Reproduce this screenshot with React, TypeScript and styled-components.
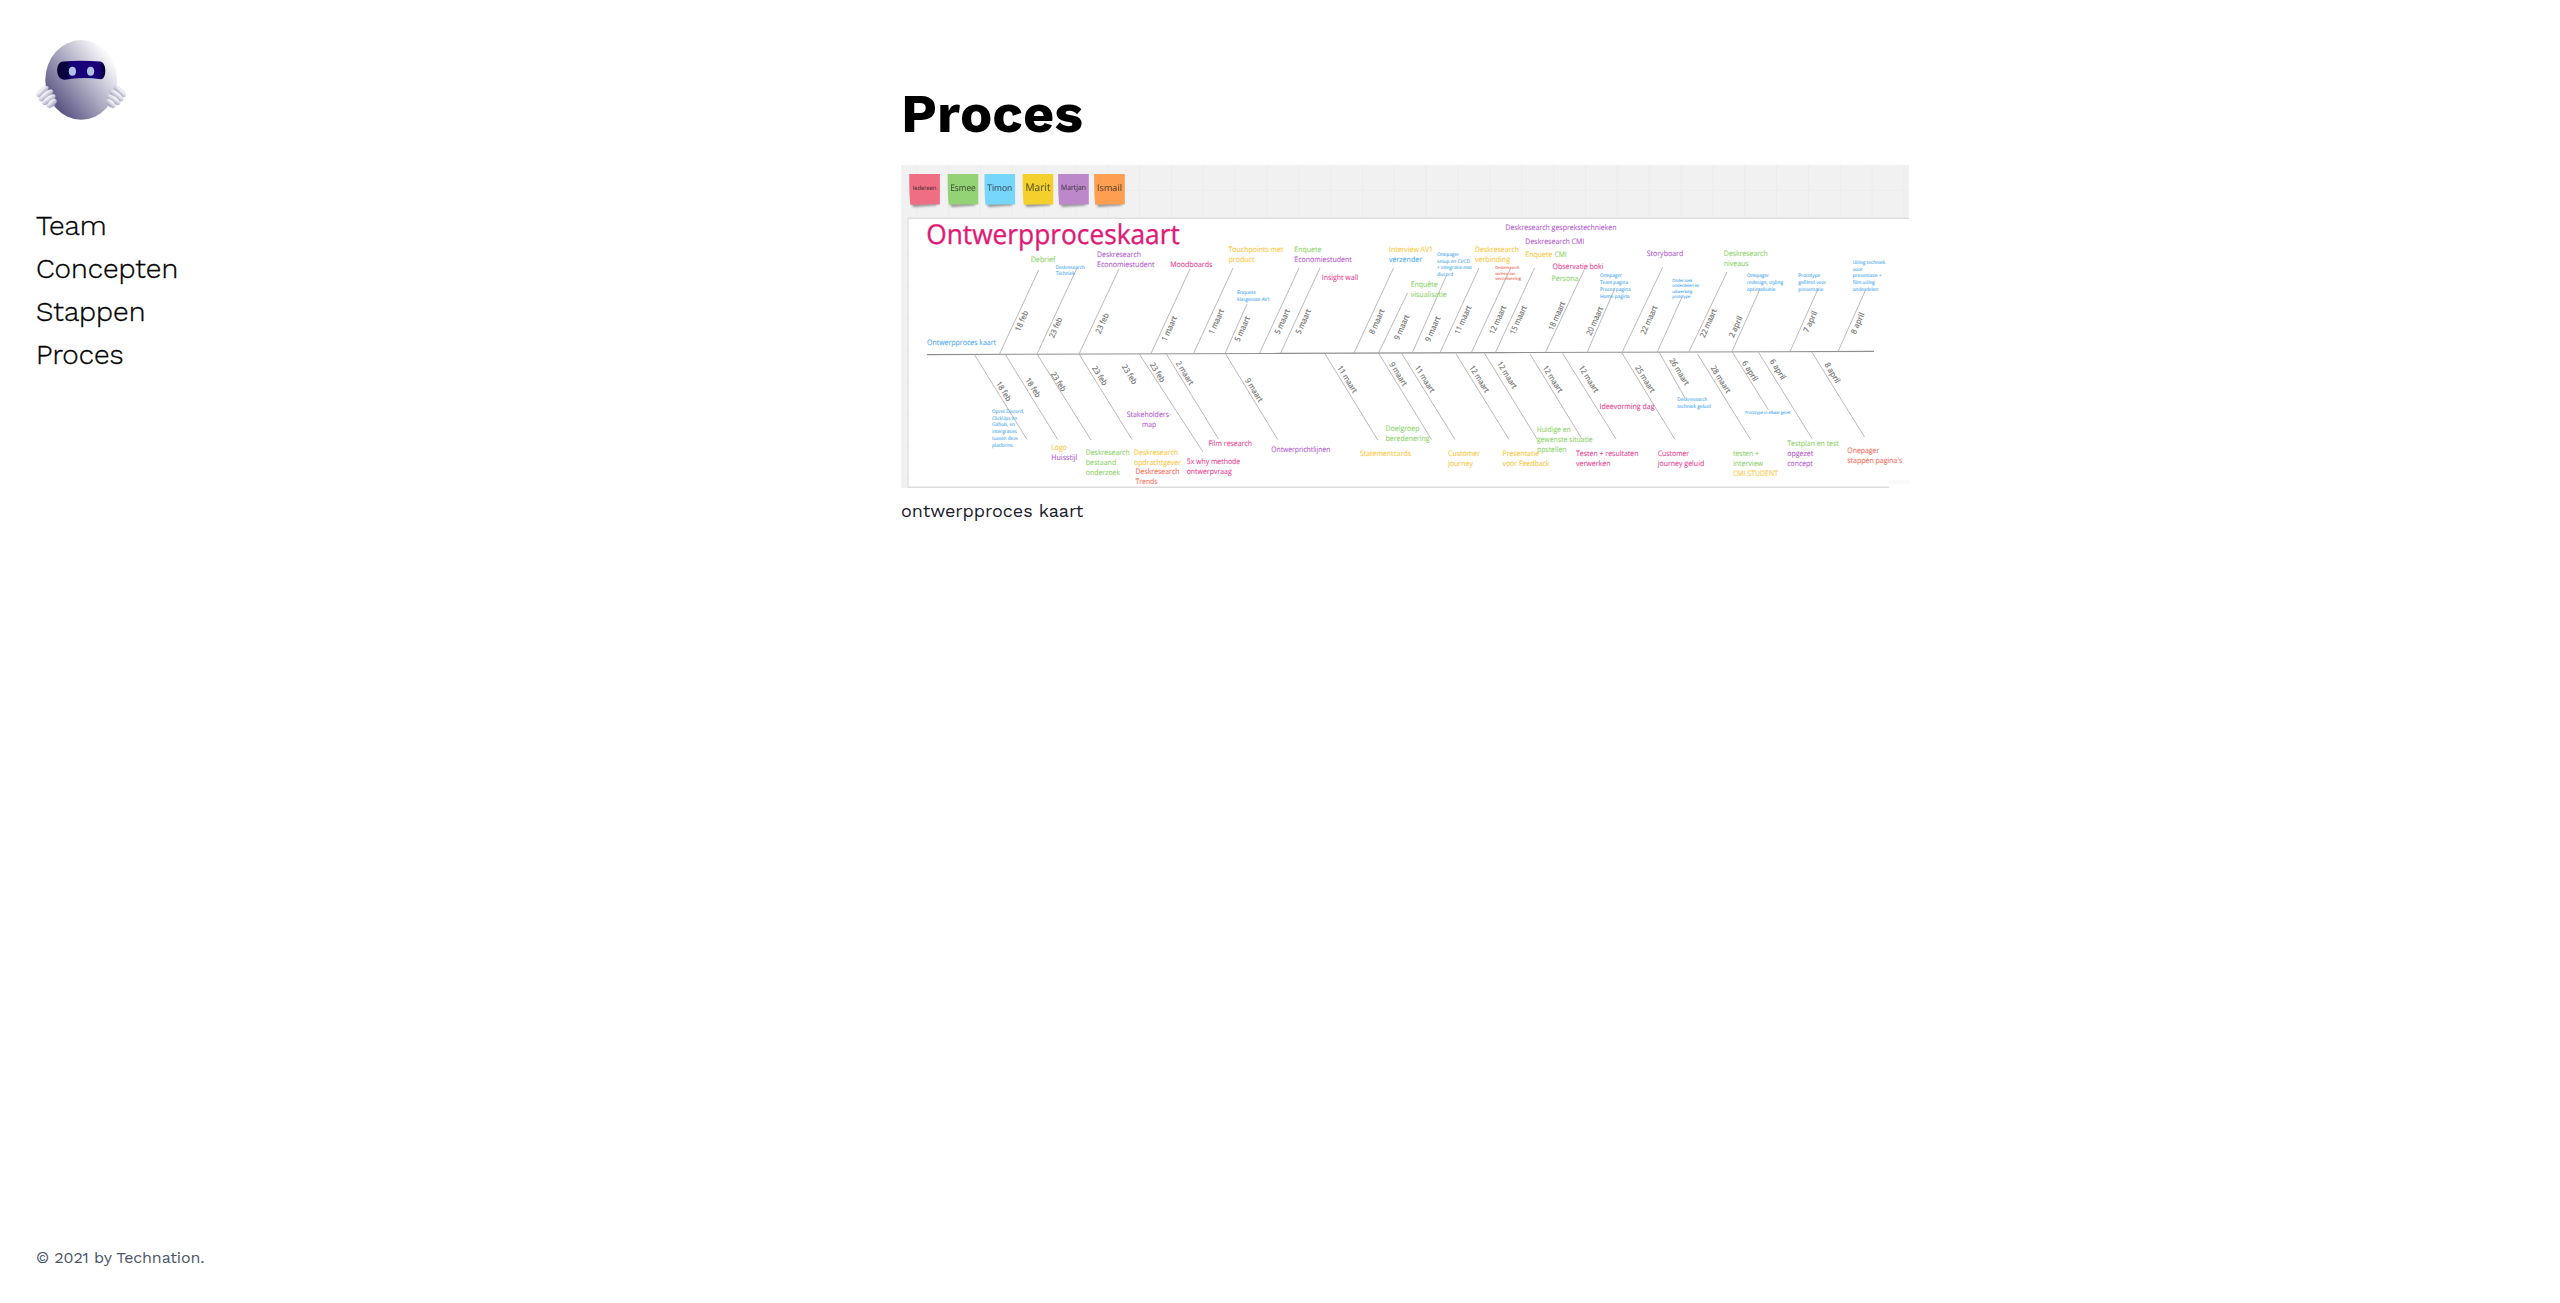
import React from "react";
import styled, { createGlobalStyle } from "styled-components";

const GlobalStyle = createGlobalStyle`
  *, *::before, *::after { box-sizing: border-box; }
  body { margin: 0; background: #fff; font-family: "Work Sans", Inter, "Liberation Sans", sans-serif; }
`;

const Page = styled.div`
  display: grid;
  grid-template-columns: 865px 1080px;
  height: 1303px;
  overflow: hidden;
`;
const Sidebar = styled.aside`
  display: flex;
  flex-direction: column;
  padding: 36px 36px 35px;
`;
const Logo = styled.svg`
  width: 92px;
  height: 88px;
  display: block;
`;
const Nav = styled.nav`
  display: flex;
  flex-direction: column;
  align-items: flex-start;
  margin-top: 80px;
`;
const NavLink = styled.a`
  font-size: 28px;
  line-height: 43px;
  font-weight: 300;
  color: #000;
  -webkit-text-stroke: 0.35px #000;
  text-decoration: none;
`;
const Footer = styled.footer`
  margin-top: auto;
  font-size: 16px;
  line-height: 20px;
  letter-spacing: -0.12px;
  color: #4a5568;
`;
const Main = styled.main`
  padding: 84px 36px 0;
`;
const Title = styled.h1`
  margin: 0 0 21px;
  font-size: 54px;
  line-height: 60px;
  font-weight: 700;
  color: #000;
`;
const Figure = styled.figure`
  margin: 0;
`;
const Board = styled.svg`
  display: block;
  width: 1008px;
  height: 323px;
  font-family: "Open Sans", "Noto Sans", sans-serif;
  text-rendering: geometricPrecision;
`;
const Caption = styled.figcaption`
  margin-top: 10px;
  font-size: 18px;
  line-height: 26px;
  letter-spacing: -0.05px;
  color: #1a202c;
`;

const green = "#92d56f";
const purple = "#b65fce";
const pink = "#e84a96";
const yellow = "#fcca45";
const blue = "#52aef0";
const red = "#f47461";

type Label = [string, number, number, number, string, number?];

const labels: Label[] = [
  ["Ontwerpproces kaart", 927, 345, 69, blue],
  ["Debrief", 1030.7, 261.6, 24.7, green],
  ["Deskresearch", 1055.7, 268.5, 29, blue, 4.8],
  ["Techniek", 1055.7, 275.3, 19, blue, 4.8],
  ["Deskresearch", 1097, 256.5, 44, purple],
  ["Economiestudent", 1097, 266.5, 57.5, purple],
  ["Moodboards", 1170.3, 266.5, 42, pink],
  ["Touchpoints met", 1228.5, 251.5, 55, yellow],
  ["product", 1228.5, 261.5, 26, yellow],
  ["Enquete", 1294.3, 251.5, 27, green],
  ["Economiestudent", 1294.3, 261.5, 57.5, purple],
  ["Insight wall", 1321.7, 279.7, 36.5, pink],
  ["Enquete", 1237, 294, 19, blue, 4.8],
  ["klasgenote AV1", 1237, 300.5, 33, blue, 4.8],
  ["Interview AV1", 1389, 251.5, 44, yellow],
  ["verzender", 1389, 261.5, 33, blue],
  ["Onepager", 1437, 256, 22, blue, 4.8],
  ["setup en CI/CD", 1437, 262.7, 33, blue, 4.8],
  ["+ integratie met", 1437, 269.3, 35, blue, 4.8],
  ["discord", 1437, 276, 16, blue, 4.8],
  ["Enquête", 1410.7, 286.5, 27, green],
  ["visualisatie", 1410.7, 296.7, 36, green],
  ["Deskresearch", 1475, 251.5, 44, yellow],
  ["verbinding", 1475, 261.5, 35, yellow],
  ["Deskresearch", 1495.3, 269.3, 24, red, 4.1],
  ["vormen van", 1495.3, 274.7, 20, red, 4.1],
  ["verzelvering", 1495.3, 280.2, 26, red, 4.1],
  ["Deskresearch gesprekstechnieken", 1505.5, 229.6, 111, purple],
  ["Deskresearch CMI", 1525.3, 243.7, 59, purple],
  ["Enquete", 1525.3, 256.5, 27, yellow],
  ["CMI", 1554.5, 256.5, 12.2, green],
  ["Observatie boki", 1552.5, 268.7, 51, pink],
  ["Persona", 1551.5, 281, 27, green],
  ["Onepager", 1600, 277.2, 22, blue, 4.8],
  ["Team pagina", 1600, 284, 28, blue, 4.8],
  ["Proces pagina", 1600, 290.7, 30.5, blue, 4.8],
  ["Home pagina", 1600, 297.5, 29.5, blue, 4.8],
  ["Storyboard", 1646.7, 255.5, 36.5, purple],
  ["Onderzoek", 1672.3, 281.5, 20, blue, 4.3],
  ["onderdelen en", 1672.3, 287.2, 27, blue, 4.3],
  ["uitwerking", 1672.3, 292.9, 20, blue, 4.3],
  ["prototype", 1672.3, 298.4, 18, blue, 4.3],
  ["Deskresearch", 1723.7, 256, 44, green],
  ["niveaus", 1723.7, 266, 25, green],
  ["Onepager", 1747, 277.2, 22, blue, 4.8],
  ["redesign, styling", 1747, 284, 36, blue, 4.8],
  ["optimalisatie", 1747, 290.7, 28.5, blue, 4.8],
  ["Prototype", 1798.3, 277.2, 22, blue, 4.8],
  ["gefilmd voor", 1798.3, 284, 28, blue, 4.8],
  ["presentatie", 1798.3, 290.7, 25, blue, 4.8],
  ["Uitleg techniek", 1852.7, 263.7, 32.5, blue, 4.8],
  ["voor", 1852.7, 270.5, 10, blue, 4.8],
  ["presentatie +", 1852.7, 277.2, 29, blue, 4.8],
  ["film uitleg", 1852.7, 284, 22, blue, 4.8],
  ["onderdelen", 1852.7, 290.7, 25.5, blue, 4.8],
  ["Opzet Discord,", 992, 412.7, 32, blue, 4.8],
  ["ClickUps en", 992, 419.5, 25, blue, 4.8],
  ["Github, en", 992, 426.2, 23, blue, 4.8],
  ["intergraties", 992, 433, 25, blue, 4.8],
  ["tussen deze", 992, 439.7, 26, blue, 4.8],
  ["platforms", 992, 446.5, 21, blue, 4.8],
  ["Logo", 1051.3, 450.3, 15.5, yellow],
  ["Huisstijl", 1051.3, 460.3, 26, purple],
  ["Deskresearch", 1085.7, 455.3, 44, green],
  ["bestaand", 1085.7, 465.3, 30.5, green],
  ["onderzoek", 1085.7, 475.3, 34.5, green],
  ["Stakeholders-", 1126.7, 416.7, 44.5, purple],
  ["map", 1142, 426.7, 14, purple],
  ["Deskresearch", 1134, 455.3, 44, yellow],
  ["opdrachtgever", 1134, 465.3, 47, yellow],
  ["Deskresearch", 1135.5, 474.3, 44, red],
  ["Trends", 1135.5, 484.3, 22, red],
  ["Film research", 1208.5, 446.3, 43.5, pink],
  ["5x why methode", 1186.7, 464.2, 53.5, pink],
  ["ontwerpvraag", 1186.7, 474.2, 45, pink],
  ["Ontwerprichtlijnen", 1271.3, 451.7, 59, purple],
  ["Doelgroep", 1385.5, 430.7, 34, green],
  ["beredenering", 1385.5, 440.9, 44, green],
  ["Statementcards", 1360, 456.2, 51, yellow],
  ["Customer", 1448, 456.2, 32, yellow],
  ["journey", 1448, 466.2, 25, yellow],
  ["Presentatie", 1502.5, 456.4, 36.5, yellow],
  ["voor Feedback", 1502.5, 466.4, 47, yellow],
  ["Huidige en", 1536.7, 431.7, 34, green],
  ["gewenste situatie", 1536.7, 441.7, 56, green],
  ["opstellen", 1537, 451.5, 29.5, green],
  ["Testen + resultaten", 1576, 456.2, 62.5, pink],
  ["verwerken", 1576, 466.2, 34.5, pink],
  ["Ideevorming dag", 1599.5, 409.3, 55, pink],
  ["Deskresearch", 1677.3, 401, 30, blue, 4.8],
  ["techniek geluid", 1677.3, 407.7, 33.3, blue, 4.8],
  ["Prototype in elkaar gezet", 1745, 414.3, 45.5, blue, 4.3],
  ["Customer", 1657.7, 456.2, 31.5, pink],
  ["journey geluid", 1657.7, 466.2, 46.5, pink],
  ["testen +", 1733, 456.2, 26, green],
  ["interview", 1733, 466.2, 30, green],
  ["CMI STUDENT", 1733, 476.2, 45, yellow],
  ["Testplan en test", 1787.3, 446.3, 51.5, green],
  ["opgezet", 1787.3, 456.3, 26, purple],
  ["concept", 1787.3, 466.3, 25.5, purple],
  ["Onepager", 1847.3, 453.3, 32, red],
  ["stappen pagina's", 1847.3, 463.3, 55, red],
];

const branches: [number, number, number, number][] = [
  [1038.7, 270, 999.5, 354], [1077, 268, 1037, 354], [1119, 269, 1079, 354],
  [1190, 269, 1151, 353.5], [1233, 268, 1193.5, 353.5], [1247, 304, 1225, 353.5],
  [1299, 268, 1259.5, 353.3], [1320, 268, 1280.5, 353.3], [1393.5, 268, 1354, 353],
  [1407.5, 293, 1378.5, 353], [1446.7, 275, 1412.3, 352.7], [1479, 268, 1440, 352.7],
  [1510.7, 268, 1471.3, 352.7], [1534.5, 268, 1495.3, 352.7], [1585, 268, 1545.5, 352.3],
  [1615, 288, 1587.3, 352], [1662.7, 267.3, 1622.3, 352], [1682, 297, 1657.3, 352],
  [1727, 272, 1689, 351.7], [1760, 289, 1732, 351.5], [1818, 289, 1790, 351.5],
  [1866, 289, 1838, 351.5],
  [974, 354, 1027, 439.5], [1005, 354, 1057.7, 439.5], [1037, 354, 1091, 440],
  [1079, 354, 1132, 439.5], [1139.3, 354, 1203, 452], [1166, 353.5, 1218.5, 439],
  [1225, 353, 1277.7, 439.5], [1324.5, 353, 1377.7, 440], [1378.5, 353, 1431.5, 439.5],
  [1402, 354, 1455, 439.5], [1456, 354, 1509, 439.5], [1484, 352.5, 1537, 439],
  [1530, 354, 1582, 439], [1562, 352.5, 1616, 439], [1622, 353, 1675, 439.5],
  [1659, 352, 1685, 398], [1697.5, 354, 1750.5, 439.5], [1732, 351.5, 1768.5, 410],
  [1758, 351.5, 1812, 438.5], [1811.5, 351.5, 1864.5, 437],
];

const datesAbove: [string, number, number][] = [
  ["18 feb", 1021.7, 321], ["23 feb", 1055.7, 327.7], ["23 feb", 1102.3, 323.3],
  ["1 maart", 1169.3, 328.7], ["1 maart", 1216.3, 321.7], ["5 maart", 1242.3, 329],
  ["5 maart", 1282.3, 321.7], ["5 maart", 1303.3, 321.7], ["8 maart", 1376.7, 321.7],
  ["9 maart", 1401.7, 327.3], ["9 maart", 1432.7, 329], ["11 maart", 1463, 320],
  ["12 maart", 1497.7, 320], ["15 maart", 1518.3, 320], ["18 maart", 1556.7, 316],
  ["20 maart", 1594.7, 321], ["22 maart", 1649, 320], ["22 maart", 1708.3, 323.3],
  ["2 april", 1735.7, 326.7], ["7 april", 1810.3, 321.7], ["8 april", 1857.7, 323.3],
];

const datesBelow: [string, number, number][] = [
  ["18 feb", 1003.7, 391.3], ["18 feb", 1033, 387.7], ["23 feb", 1058.3, 381.7],
  ["23 feb", 1099.7, 375.7], ["23 feb", 1129.3, 374.3], ["23 feb", 1157.3, 372.3],
  ["2 maart", 1184.7, 373], ["9 maart", 1254, 390], ["11 maart", 1347.3, 379.3],
  ["9 maart", 1398.3, 374], ["11 maart", 1424.7, 379], ["12 maart", 1479.3, 379],
  ["12 maart", 1507, 375], ["12 maart", 1552.7, 379], ["12 maart", 1588.7, 379],
  ["25 maart", 1645, 379], ["26 maart", 1679.3, 371.7], ["28 maart", 1720.7, 379.3],
  ["6 april", 1750, 371], ["6 april", 1777.7, 369.3], ["8 april", 1832.3, 372.7],
];

const notes: [string, number, string, number, number][] = [
  ["Iedereen", 909.2, "#f06e83", 6, 24],
  ["Esmee", 947.6, "#93d275", 9, 25.5],
  ["Timon", 984.4, "#76d6fb", 9, 25],
  ["Marit", 1022.6, "#f4d02d", 10.4, 25],
  ["Martjan", 1058.1, "#bd88c9", 7.4, 25],
  ["Ismail", 1094.1, "#fe9e50", 9, 25],
];

const dateLength = (t: string) =>
  t.endsWith("feb") ? 21.5 : t.endsWith("april") ? 22.5 : t.length === 8 ? 30.5 : 26.5;

function DateLabel({ text, x, y, angle }: { text: string; x: number; y: number; angle: number }) {
  return (
    <text
      transform={`translate(${x} ${y}) rotate(${angle})`}
      y={2.6}
      textAnchor="middle"
      textLength={dateLength(text)}
      lengthAdjust="spacingAndGlyphs"
      fontSize={7.8}
      fill="#6e6e6e"
      stroke="#6e6e6e"
      strokeWidth={0.15}
    >
      {text}
    </text>
  );
}

function ProcessMap() {
  const columns = Array.from({ length: 32 }, (_, i) => 916.7 + i * 31.85);
  const rows = Array.from({ length: 10 }, (_, i) => 190.3 + i * 32);
  return (
    <Board viewBox="901 165 1008 323" role="img" aria-label="ontwerpproces kaart">
      <defs>
        <filter id="noteShadow" x="-20%" y="-20%" width="140%" height="160%">
          <feGaussianBlur stdDeviation="1.1" />
        </filter>
      </defs>
      <rect x={901} y={165} width={1008} height={323} fill="#f1f1f1" />
      {columns.map((x) => (
        <line key={x} x1={x} x2={x} y1={165} y2={219} stroke="#ececec" />
      ))}
      {rows.map((y) => (
        <line key={y} x1={901} x2={1909} y1={y} y2={y} stroke="#ededed" />
      ))}
      <rect x={908} y={217.6} width={1001} height={1.4} fill="#dedede" />
      <rect x={907.6} y={218} width={1.2} height={269.5} fill="#dcdcdc" />
      <rect x={908.8} y={219} width={1000.2} height={269} fill="#fff" />
      <rect x={908} y={486.6} width={981} height={1.2} fill="#d4d4d4" />
      <rect x={1889} y={480} width={20} height={4} fill="#fafafa" />
      {notes.map(([name, x, color, size, width]) => (
        <g key={name}>
          <path d={`M${x + 2} 203h27l-2 2.5q-12 .5-23 1.5z`} fill="#555" opacity={0.6} filter="url(#noteShadow)" />
          <path d={`M${x} 174h30.7v30.4q-14-.3-29.6 .4q-1.1-9-1.1-30.8z`} fill={color} />
          <text
            x={x + 15.4}
            y={187.6 + size * 0.36}
            textAnchor="middle"
            fontSize={size}
            textLength={width}
            lengthAdjust="spacingAndGlyphs"
            fill="#222"
            opacity={0.7}
            stroke="#222"
            strokeWidth={0.12}
          >
            {name}
          </text>
        </g>
      ))}
      <text
        x={926.3}
        y={243.6}
        fontSize={27.4}
        textLength={253.5}
        lengthAdjust="spacingAndGlyphs"
        fill="#df1a76"
        stroke="#df1a76"
        strokeWidth={0.35}
      >
        Ontwerpproceskaart
      </text>
      <path d="M927 354.6L1280 353.4L1500 352.6L1874 351.4" fill="none" stroke="#8f8f8f" strokeWidth={1.1} />
      {branches.map(([x1, y1, x2, y2], i) => (
        <line key={i} x1={x1} y1={y1} x2={x2} y2={y2} stroke="#a8a8a8" strokeWidth={0.8} />
      ))}
      {datesAbove.map(([t, x, y], i) => (
        <DateLabel key={i} text={t} x={x} y={y} angle={-66} />
      ))}
      {datesBelow.map(([t, x, y], i) => (
        <DateLabel key={i} text={t} x={x} y={y} angle={58} />
      ))}
      {labels.map(([t, x, y, w, color, size = 7.6], i) => (
        <text
          key={i}
          x={x}
          y={y}
          fontSize={size}
          textLength={w}
          lengthAdjust="spacingAndGlyphs"
          fill={color}
          stroke={color}
          strokeWidth={0.12}
        >
          {t}
        </text>
      ))}
    </Board>
  );
}

function Hand() {
  return (
    <g stroke="#b3b1ca" strokeWidth={0.3}>
      <ellipse cx={42.6} cy={91.6} rx={7.4} ry={3.2} transform="rotate(-42 42.6 91.6)" fill="url(#finger)" />
      <ellipse cx={46} cy={95.4} rx={8.4} ry={3.4} transform="rotate(-38 46 95.4)" fill="url(#finger)" />
      <ellipse cx={48.9} cy={99.6} rx={7.8} ry={3.4} transform="rotate(-36 48.9 99.6)" fill="url(#finger)" />
      <ellipse cx={51.8} cy={103.4} rx={5.8} ry={3.2} transform="rotate(-42 51.8 103.4)" fill="url(#finger)" />
    </g>
  );
}

function Robot() {
  return (
    <Logo viewBox="36 36 92 88" role="img" aria-label="Technation">
      <defs>
        <linearGradient id="shell" x1="0.12" y1="0.78" x2="0.82" y2="0.16">
          <stop offset="0" stopColor="#5c5785" />
          <stop offset="0.5" stopColor="#aba9c1" />
          <stop offset="1" stopColor="#f8f8f9" />
        </linearGradient>
        <linearGradient id="visor">
          <stop offset="0.2" stopColor="#08013c" />
          <stop offset="0.27" stopColor="#170078" />
          <stop offset="0.88" stopColor="#170078" />
          <stop offset="0.94" stopColor="#08013c" />
        </linearGradient>
        <linearGradient id="finger" x1="0" y1="0" x2="0" y2="1">
          <stop offset="0.2" stopColor="#f3f3f7" />
          <stop offset="1" stopColor="#9a97b8" />
        </linearGradient>
      </defs>
      <ellipse cx={81.2} cy={79.9} rx={35.9} ry={39.8} fill="url(#shell)" />
      <path d="M63 61.5Q81 60 100 61.5C107 62 107 79 101 79.2Q81 76.5 65 79.8C55 80 55 62 63 61.5Z" fill="url(#visor)" />
      <ellipse cx={72.4} cy={71.3} rx={3.6} ry={4.5} fill="#b1bfe3" />
      <ellipse cx={90.6} cy={71.3} rx={3.6} ry={4.5} fill="#b1bfe3" />
      <Hand />
      <g transform="translate(162.4 0) scale(-1 1)">
        <Hand />
      </g>
    </Logo>
  );
}

const links = ["Team", "Concepten", "Stappen", "Proces"];

export default function App() {
  return (
    <Page>
      <GlobalStyle />
      <Sidebar>
        <Robot />
        <Nav>
          {links.map((name) => (
            <NavLink key={name}>{name}</NavLink>
          ))}
        </Nav>
        <Footer>© 2021 by Technation.</Footer>
      </Sidebar>
      <Main>
        <Title>Proces</Title>
        <Figure>
          <ProcessMap />
          <Caption>ontwerpproces kaart</Caption>
        </Figure>
      </Main>
    </Page>
  );
}
